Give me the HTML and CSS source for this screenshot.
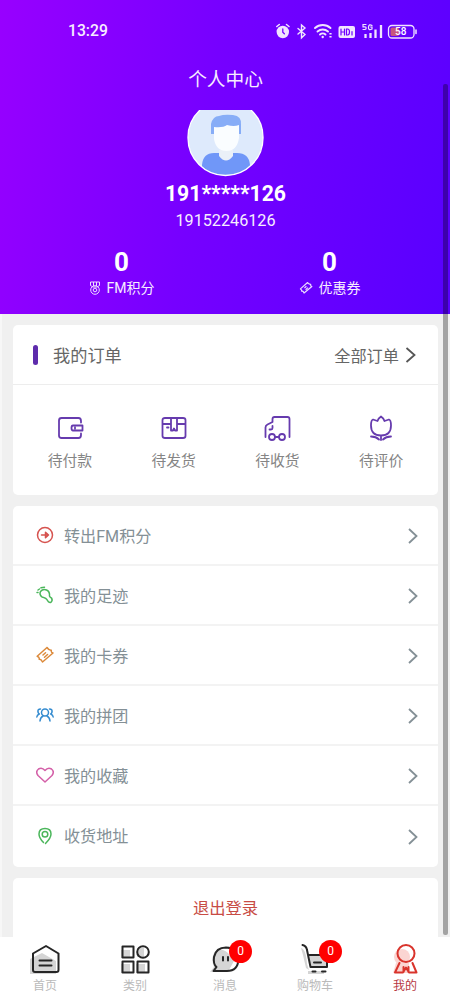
FILE: index.html
```html
<!DOCTYPE html>
<html lang="zh-CN">
<head>
<meta charset="utf-8">
<title>个人中心</title>
<link rel="stylesheet" href="styles.css">
</head>
<body>
<div class="phone">
  <header class="hero">
    <div class="status">
      <span class="clock">13:29</span>
      <svg class="status-icons" width="142" height="20" viewBox="0 0 142 20" fill="none" stroke="#f1e4ff" stroke-width="1.5" stroke-linecap="round">
        <circle cx="6.800" cy="11" r="6.200" fill="#f1e4ff" stroke="none"/>
        <path d="M.8 5.500l2.500-2M13 5.500l-2.500-2"/>
        <path d="M6.800 8v3.300l1.600 1.500" stroke="#7600ff" stroke-width="1.300"/>
        <path d="M22 7.500l7 6-3.500 3.300V4l3.500 3-7 6" stroke-width="1.400"/>
        <path d="M39 7a11.500 11.500 0 0 1 15.500 0M41.500 10.500a7.700 7.700 0 0 1 10.500 0M44 13.500a4 4 0 0 1 5.500 0" stroke-width="1.900"/>
        <circle cx="46.700" cy="16" r="1.200" fill="#f1e4ff" stroke="none"/>
        <path d="M54.500 12v1.500M54.500 15v1.500" stroke-width="2.200" stroke-linecap="butt"/>
        <rect x="62.500" y="5" width="16.500" height="12" rx="2" fill="#f1e4ff" stroke="none"/>
        <path d="M65 8v6M68.500 8v6M65 11h3.500M70.500 8v6h1q2 0 2-3t-2-3zM76 10.500v3.500" stroke="#7000ff" stroke-width="1.200"/>
        <path d="M89.500 13v4M94.500 12v5M99.500 8.500v8.500M105 4v13" stroke-width="2.300" stroke-linecap="butt"/>
        <path d="M90 3.500h-3v2.300h2q1.200 0 1.200 1.300T89 8.500h-2M96 4.500q-3-2-3.500 1.600t3.500 1.900V6h-1.400" stroke-width="1.200"/>
        <rect x="112.500" y="4.500" width="25.500" height="12.500" rx="3.500" stroke-width="1.300"/>
        <rect x="114.500" y="6.500" width="8.500" height="8.500" rx="1.500" fill="#c8567f" stroke="none"/>
        <path d="M140 9v3.500" stroke-width="1.500"/>
        <text class="battery-text" x="119" y="14.300">58</text>
      </svg>
    </div>
    <h1 class="title">个人中心</h1>
    <svg class="avatar" width="78" height="67" viewBox="0 0 78 67">
      <defs><clipPath id="face"><path d="M13 0H64A38 37.500 0 0 1 76 28A37.500 37.500 0 0 1 1 28A38 37.500 0 0 1 13 0Z"/></clipPath></defs>
      <g clip-path="url(#face)">
        <rect width="78" height="67" fill="#deeafc"/>
        <path d="M15 67V55q1-12 12-12h23q12 0 13 12v12z" fill="#7097f8"/>
        <path d="M32 40v6q7 9 14 0v-6z" fill="#eaf0f8"/>
        <path d="M24 24V14q2-8 8-8 5-2 14-1 9 1 8 10v9z" fill="#87adf7"/>
        <path d="M27 17q9 1 13-2 7 2 12 0v13q-2 13-12.500 13T27 29z" fill="#fafdff"/>
      </g>
      <path d="M13 0A38 37.500 0 0 0 1 28A37.500 37.500 0 0 0 76 28A38 37.500 0 0 0 64 0" fill="none" stroke="#fff" stroke-width="1.300"/>
    </svg>
    <div class="name">191*****126</div>
    <div class="phone-number">19152246126</div>
    <div class="stats">
      <div class="stat"><b>0</b>
        <span><svg width="12" height="14" viewBox="0 0 12 14" fill="none" stroke="#eddcff"><path d="M1.500 1h9v3.500L8 6H4L1.500 4.500zM4.500 1v4M7.500 1v4"/><circle cx="6" cy="9" r="4.300"/><circle cx="6" cy="9" r="1.800"/></svg>FM积分</span></div>
      <div class="stat"><b>0</b>
        <span><svg width="14" height="14" viewBox="0 0 18 18" fill="none" stroke="#eddcff" stroke-width="1.500" stroke-linejoin="round"><path d="M11 2L1.800 10.200q2.200 1 1.700 3 2-.5 3 2.300L16.500 7q-2-.5-1.500-2.800-2.500.3-4-2.200zM7 9l2.500-2.200M8.500 11.200L11.500 8.500"/></svg>优惠券</span></div>
    </div>
  </header>

  <main class="content">
    <section class="card orders">
      <div class="orders-head"><i class="mark"></i><h2>我的订单</h2><span class="all">全部订单</span>
        <svg width="12" height="18" viewBox="0 0 12 18" fill="none" stroke="#555" stroke-width="1.800"><path d="M1.500 2l8 7-8 7"/></svg></div>
      <div class="order-types">
        <div class="order-type"><svg width="28" height="28" viewBox="0 0 28 28"><path d="M25 8.500V7q0-3-2.500-3h-17Q3 4 3 6.500v15Q3 24 5.500 24h17q2.500 0 2.500-3v-1.500M17 11.500h9.500v5H17q-1.500 0-1.500-2.500t1.500-2.500zM19 13.500v1"/></svg>待付款</div>
        <div class="order-type"><svg width="28" height="28" viewBox="0 0 28 28"><path d="M5 4h18q2.500 0 2.500 2v16q0 2-2.500 2H5q-2.500 0-2.500-2V6Q2.500 4 5 4zM2.500 10H11M17 10h8.500M11 4v12.500h2l1-2 1 2h2V4M7 13.500h1.500"/></svg>待发货</div>
        <div class="order-type"><svg width="28" height="28" viewBox="0 0 28 28"><path d="M2.500 23V13.500q0-2 2-3l5-2.500V5q0-2 2-2h13q2 0 2 2v18M9.500 12v2q0 1.500-1.500 1.500H6.500M12.500 23h3"/><circle cx="9" cy="23" r="3"/><circle cx="19" cy="23" r="3"/></svg>待收货</div>
        <div class="order-type"><svg width="28" height="28" viewBox="0 0 28 28"><path d="M14 2.500q3 2 3.500 4.500L22 5.500q2 .5 2 6 0 10-10 10t-10-10q0-5.500 2-6L10.500 7q.5-2.500 3.500-4.500zM14 21.500V26M4 22.500q5 0 8 3M24 22.500q-5 0-8 3"/></svg>待评价</div>
      </div>
    </section>

    <section class="card menu">
      <div class="row red"><svg class="lead" viewBox="0 0 18 18"><circle cx="9" cy="9" r="7.500"/><path d="M5.500 9h7M9.500 6.200L12.500 9l-3 2.800z"/></svg><span>转出FM积分</span><svg class="arrow" viewBox="0 0 12 18"><path d="M2 2l7.500 7L2 16"/></svg></div>
      <div class="row green"><svg class="lead" viewBox="0 0 18 18"><path d="M6 11Q3 8.500 4.500 5.500 7 2.500 10.500 4q3.500 1.500 3 6 .5 1.500 2 2 1.500 2.500-.5 4.300-2.500.7-3.500-1.800-1-2.500-5.500-3.500M5 1.800l3.500-.6M2 4l1.500-1M1 6.500h1"/></svg><span>我的足迹</span><svg class="arrow" viewBox="0 0 12 18"><path d="M2 2l7.500 7L2 16"/></svg></div>
      <div class="row orange"><svg class="lead" viewBox="0 0 18 18"><path d="M11 1.500L1.200 10.200q2.500 1 2 3 2-.2 3.300 2.800L17 7q-2.200-.5-1.700-2.800-2.500.3-4.300-2.700zM7 9l2.500-2.200M8.500 11.200L11.500 8.500"/></svg><span>我的卡券</span><svg class="arrow" viewBox="0 0 12 18"><path d="M2 2l7.500 7L2 16"/></svg></div>
      <div class="row blue"><svg class="lead" viewBox="0 0 18 18"><circle cx="9" cy="6.500" r="3.500"/><path d="M4 15q.3-3.500 3-5M14 15q-.3-3.500-3-5M4.500 3Q1.500 3 2 6q.3 1.500 1.300 2Q1 9 .8 11M13.500 3q3 0 2.500 3-.3 1.500-1.300 2Q17 9 17.200 11"/></svg><span>我的拼团</span><svg class="arrow" viewBox="0 0 12 18"><path d="M2 2l7.500 7L2 16"/></svg></div>
      <div class="row pink"><svg class="lead" viewBox="0 0 18 18"><path d="M9 16L2 9.500Q-.8 5.500 2.500 3 6 .8 9 4.500 12 .8 15.500 3q3.300 2.500.5 6.500z"/></svg><span>我的收藏</span><svg class="arrow" viewBox="0 0 12 18"><path d="M2 2l7.500 7L2 16"/></svg></div>
      <div class="row green"><svg class="lead" viewBox="0 0 18 18"><path d="M7.500 15.500Q3 11 3 7q0-5.500 6-5.500T15 7q0 4-5.500 9.500"/><circle cx="9" cy="7.200" r="2.800"/></svg><span>收货地址</span><svg class="arrow" viewBox="0 0 12 18"><path d="M2 2l7.500 7L2 16"/></svg></div>
    </section>

    <section class="card logout">退出登录</section>
  </main>

  <nav class="tabs">
    <div class="tab"><svg width="32" height="32" viewBox="0 0 32 32"><path class="shade" d="M1 16l12-6 14 8v13H1z"/><path d="M4 10.500L17 3l12.500 7.500V27q0 2-2 2H6q-2 0-2-2zM10.500 17.500h12M10.500 22.500h12"/></svg>首页</div>
    <div class="tab"><svg width="32" height="32" viewBox="0 0 32 32"><path class="shade" d="M2 7h9v8H2zM2 21h9v9H2zM17 21h9v9h-9zM18 5h7v9h-7z"/><path d="M3.500 3.500h11v11h-11zM3.500 18.500h11v11h-11zM18.500 18.500h11v11h-11z"/><circle cx="24" cy="9" r="5.800"/></svg>类别</div>
    <div class="tab"><svg width="32" height="32" viewBox="0 0 32 32"><path class="shade" d="M5 10q6-7 14 0l6 8-5 9-19 2 4-5q-3-7 0-14z"/><path d="M4.500 28l3-4Q4 21 5 14 7 4.500 17 4.500 29 5 29.500 16 29 28 18 28zM14 14v3.500M19 14v3.500"/></svg><em class="badge">0</em>消息</div>
    <div class="tab"><svg width="32" height="32" viewBox="0 0 32 32"><path class="shade" d="M2 5q5 1 6 16l2 6-3-2L4 12zM10 13h17v11H12zM9 28h16v3H9z"/><path d="M3.500 2q4 1 4.500 5l3.500 17H28V12H9M15 19.500h7M13.500 28.500h3M23 28.500h3.500"/></svg><em class="badge">0</em>购物车</div>
    <div class="tab active"><svg width="32" height="32" viewBox="0 0 32 32"><circle class="shade" cx="13" cy="14" r="8"/><path class="shade" d="M7 20h13v10H4z"/><circle cx="17" cy="10.500" r="8.500"/><path d="M10.500 20L6 29.500h8l3-5 3 5h7.500L23.500 20M14.500 24v5M19.500 24v5"/></svg>我的</div>
  </nav>
  <i class="scrollbar"></i>
</div>
</body>
</html>
```
FILE: styles.css
```css
* { box-sizing: border-box; }
body { margin: 0; }
.phone {
  position: relative;
  width: 450px;
  height: 1000px;
  overflow: hidden;
  display: flex;
  flex-direction: column;
  background: #f0f0f0;
  font-family: Roboto, "Noto Sans CJK SC", sans-serif;
  font-weight: 400;
}
.hero {
  height: 314px;
  flex: none;
  display: flex;
  flex-direction: column;
  align-items: center;
  background: linear-gradient(100deg, #9800ff 0%, #7600ff 45%, #5800ff 100%);
  color: #f7edff;
}
.status {
  width: 100%;
  height: 60px;
  padding: 1px 32px 0 68px;
  display: flex;
  align-items: center;
  justify-content: space-between;
}
.clock { font-size: 15.7px; font-weight: 500; line-height: 20px; }
.battery-text { font: 500 10px Roboto, sans-serif; fill: #fff; stroke: none; }
.title { margin: 6px 0 0; padding-left: 1px; font-size: 18.7px; font-weight: 400; line-height: 28px; height: 28px; }
.avatar { display: block; margin: 16px 0 0 2px; flex: none; }
.name { margin: 4px 0 0 1px; font-size: 21.2px; line-height: 26px; font-weight: 700; color: #fff; }
.phone-number { margin: 4px 0 0 1px; font-size: 16.2px; line-height: 20px; }
.stats { width: 416px; margin: 16px 0 0 1px; display: flex; }
.stat { flex: 1; display: flex; flex-direction: column; align-items: center; }
.stat b { font-size: 26px; line-height: 30px; color: #fff; }
.stat span { display: flex; align-items: center; gap: 6px; font-size: 14px; line-height: 22px; }

.content { flex: 1; min-height: 0; overflow: hidden; padding: 11px 12px 0 11px; border-left: 2px solid #f7f7f7; display: flex; flex-direction: column; gap: 11px; }
.card { flex: none; background: #fff; border-radius: 5px; }
.orders { height: 170px; }
.orders-head { height: 60px; display: flex; align-items: center; padding: 0 21px 0 20px; border-bottom: 1px solid #ededed; color: #666; }
.mark { width: 5px; height: 20px; border-radius: 3px; background: #5e2cac; }
.orders-head h2 { margin: 2px auto 0 15px; font-size: 17.2px; font-weight: 400; line-height: 24px; }
.all { font-size: 16.2px; margin-right: 6px; }
.order-types { padding: 29px 5px 0; display: grid; grid-template-columns: repeat(4, 1fr); }
.order-type { display: flex; flex-direction: column; align-items: center; gap: 8px; font-size: 14.8px; line-height: 22px; color: #858585; }
.order-type svg { fill: none; stroke: #663bae; stroke-width: 1.8; stroke-linejoin: round; stroke-linecap: round; }
.menu { height: 361px; }
.row { height: 60px; display: flex; align-items: center; padding: 0 19px 0 23px; border-bottom: 2px solid #f3f3f3; font-size: 16.1px; color: #849096; }
.row:last-child { height: 59px; border: 0; }
.row span { margin: -1px auto 0 10px; }
.lead { width: 18px; height: 18px; fill: none; stroke: currentColor; stroke-width: 1.5; stroke-linecap: round; stroke-linejoin: round; }
.arrow { width: 12px; height: 18px; margin-top: 2px; fill: none; stroke: #849096; stroke-width: 1.8; }
.red .lead { color: #d6534f; }
.green .lead { color: #4bb65b; }
.orange .lead { color: #dc8a3b; }
.blue .lead { color: #358cd0; }
.pink .lead { color: #d460a8; }
.logout { height: 70px; padding-top: 1px; line-height: 60px; text-align: center; font-size: 16.3px; color: #c84c45; }

.tabs { position: relative; flex: none; height: 63px; background: #fff; display: grid; grid-template-columns: repeat(5, 1fr); }
.tab { position: relative; display: flex; flex-direction: column; align-items: center; gap: 1px; padding-top: 6px; font-size: 12px; line-height: 20px; color: #bababa; }
.tab svg { flex: none; fill: none; stroke: #262626; stroke-width: 2; stroke-linejoin: round; stroke-linecap: round; }
.tab .shade { fill: #d5d5d5; stroke: none; }
.active { color: #b73843; }
.active svg { stroke: #d9342c; }
.active .shade { fill: #fbd5d2; }
.badge { position: absolute; left: 49px; top: 3px; width: 23px; height: 23px; border-radius: 50%; background: #f00; color: #fff; font-size: 12px; font-style: normal; line-height: 23px; text-align: center; }
.scrollbar { position: absolute; left: 443px; top: 84px; width: 5px; height: 851px; border-radius: 2px; background: rgba(0, 0, 0, .32); }
```
